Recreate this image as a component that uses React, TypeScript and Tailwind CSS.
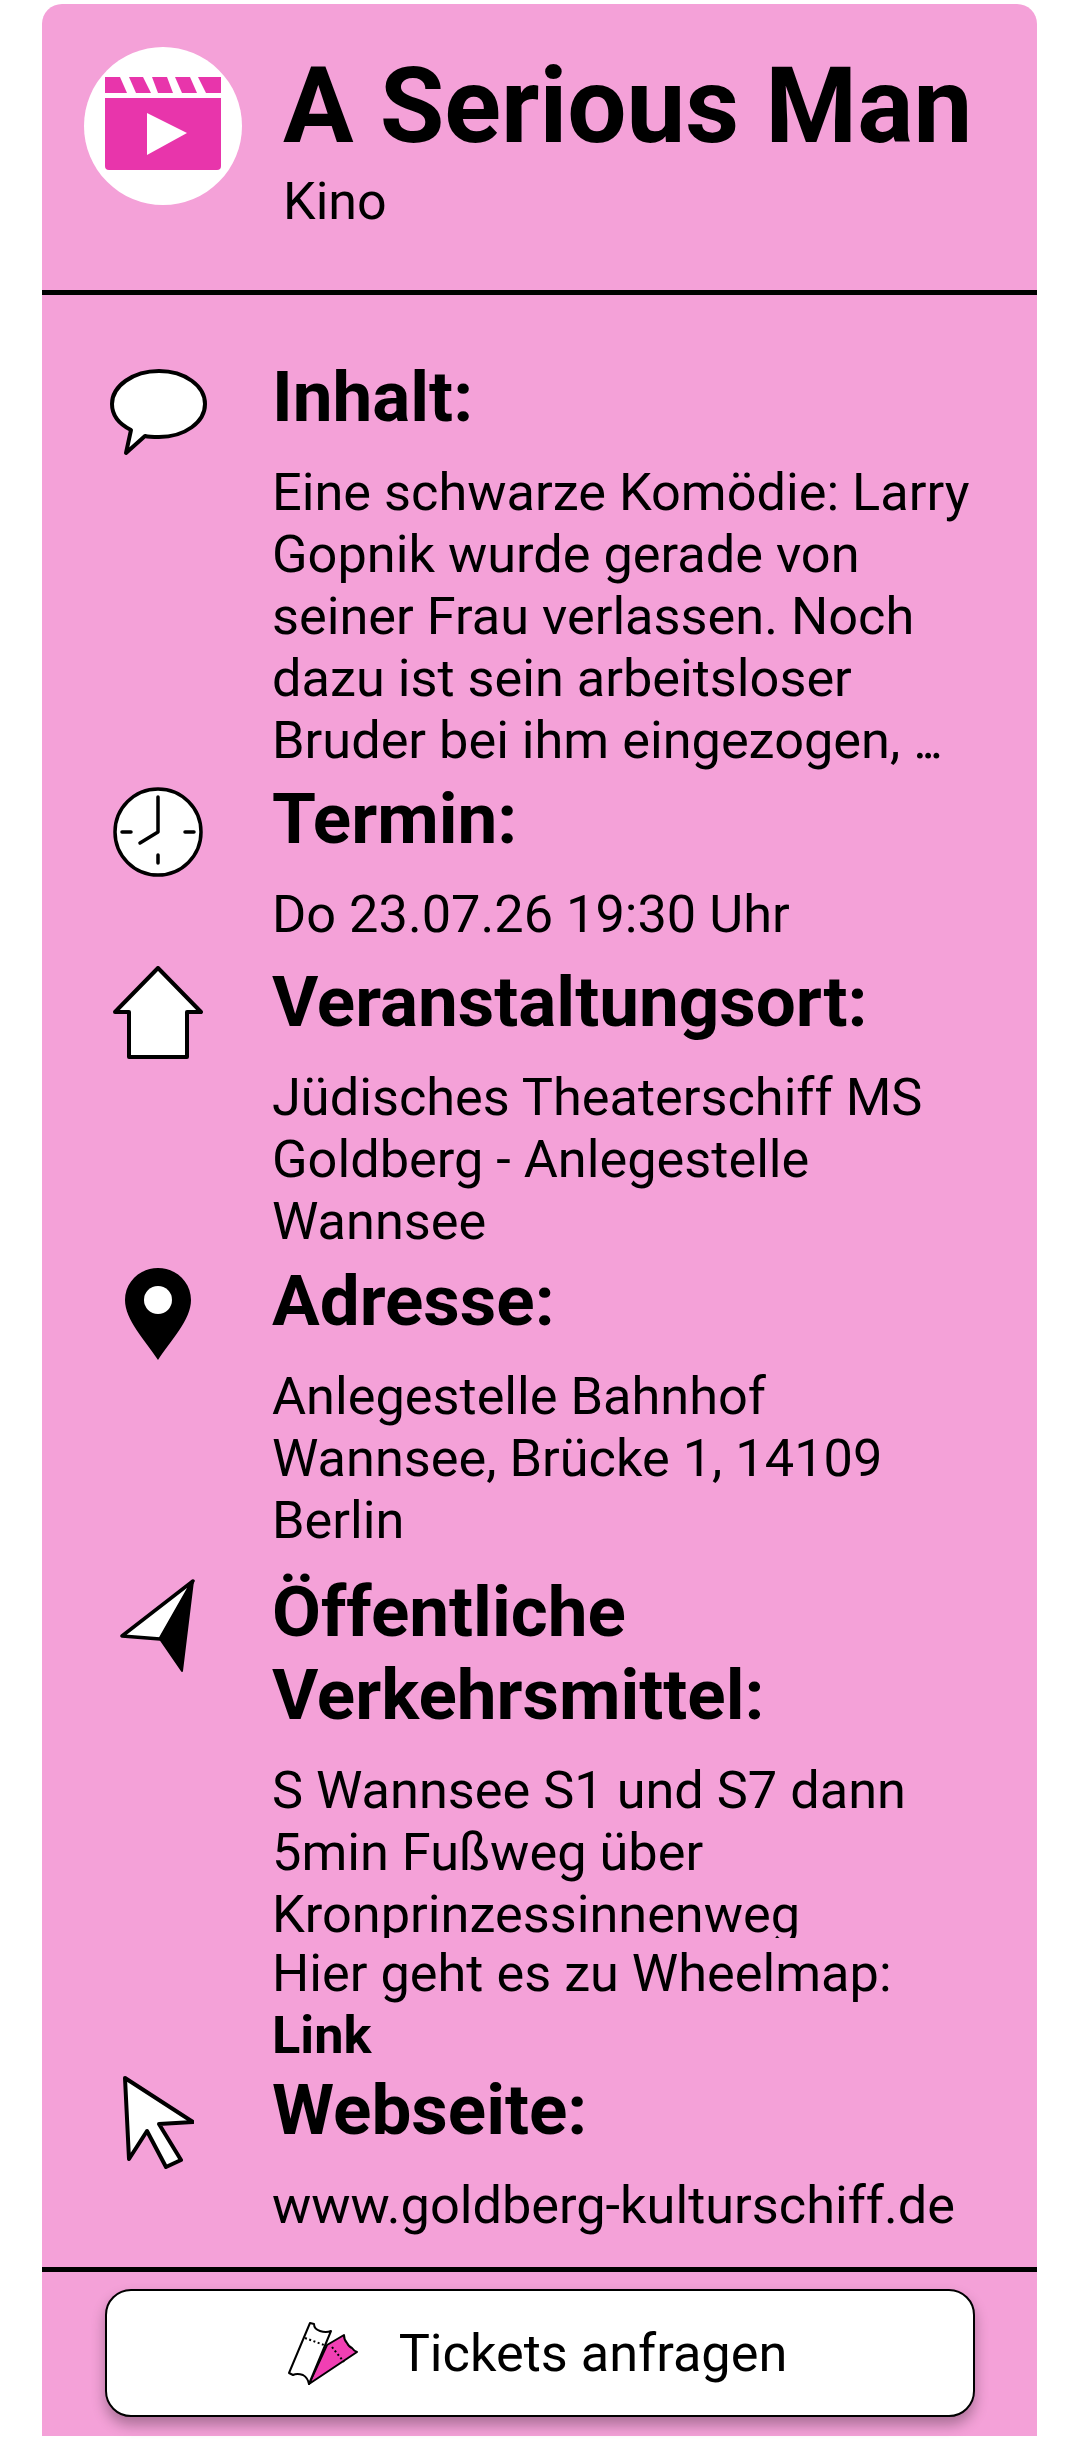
import type { ReactNode } from 'react'

const roboto = { fontFamily: 'Roboto, sans-serif' }

function ClapperIcon() {
  return (
    <svg viewBox="0 0 116 94" className="w-[116px] h-[94px] mt-[-4px]">
      <path d="M0 0h15l7 16H0z M24 0h14l8 16H31z M47 0h15l6 16H53z M70 0h15l7 16H77z M93 0h23v16H101z" fill="#e835ab" />
      <path d="M0 21h116v68q0 4-4 4H4q-4 0-4-4z" fill="#e835ab" />
      <path d="M42 36l40 20-40 22z" fill="#fff" />
    </svg>
  )
}

function SpeechIcon() {
  return (
    <svg viewBox="0 0 98 88" className="w-[98px] h-[88px]">
      <path d="M50 3C76 3 96 18 96 36S76 69 50 69c-5 0-10 0-14-1L17 85l5-23C10 56 3 47 3 36 3 18 24 3 50 3z" fill="#fff" stroke="#000" strokeWidth="4" strokeLinejoin="round" />
    </svg>
  )
}

function ClockIcon() {
  return (
    <svg viewBox="0 0 90 90" className="w-[90px] h-[90px]">
      <circle cx="45" cy="45" r="43" fill="#fff" stroke="#000" strokeWidth="3.5" />
      <path d="M45 10v35L27 56M9 45h9M72 45h9M45 68v8" fill="none" stroke="#000" strokeWidth="3.5" strokeLinecap="round" strokeLinejoin="round" />
    </svg>
  )
}

function HouseIcon() {
  return (
    <svg viewBox="0 0 90 94" className="w-[90px] h-[94px]">
      <path d="M45 2L88 46H74V91H16V46H2z" fill="#fff" stroke="#000" strokeWidth="4" strokeLinejoin="round" />
    </svg>
  )
}

function PinIcon() {
  return (
    <svg viewBox="0 0 66 92" className="w-[66px] h-[92px]">
      <path d="M33 0c18 0 33 14 33 32 0 20-20 40-33 60C20 72 0 52 0 32 0 14 15 0 33 0z" fill="#000" />
      <circle cx="33" cy="32" r="14" fill="#fff" />
    </svg>
  )
}

function ArrowIcon() {
  return (
    <svg viewBox="0 0 76 94" className="w-[76px] h-[94px]">
      <path d="M73 2L2 57l38 3z" fill="#fff" stroke="#000" strokeWidth="3.5" strokeLinejoin="round" />
      <path d="M73 2L40 60l22 32z" fill="#000" stroke="#000" strokeWidth="2" strokeLinejoin="round" />
    </svg>
  )
}

function CursorIcon() {
  return (
    <svg viewBox="0 0 72 94" className="w-[72px] h-[94px]">
      <path d="M3 3L71 47 37 49 59 85 44 92 25 56 7 84z" fill="#fff" stroke="#000" strokeWidth="4" strokeLinejoin="round" />
    </svg>
  )
}

function TicketIcon() {
  return (
    <svg viewBox="0 0 72 65" className="w-[72px] h-[65px]">
      <path d="M22 63L40 24 57 14Q57 19 60 22 62 26 65 27 67 30 70 31z" fill="#f13fb3" stroke="#000" strokeWidth="2" strokeLinejoin="round" />
      <path d="M45 26L57 41" fill="none" stroke="#000" strokeWidth="2" strokeDasharray="2 2.5" />
      <path d="M23 2L27 3Q27 8 33 10 39 12 44 10L22 63Q21 57 16 54 10 52 6 54L2 52z" fill="#fff" stroke="#000" strokeWidth="2" strokeLinejoin="round" />
      <path d="M18 17L37 24" fill="none" stroke="#000" strokeWidth="2" strokeDasharray="2 2.5" />
    </svg>
  )
}

const rows: { icon: ReactNode; title: string; gap: string; iconPad: string; lines: ReactNode[]; extra?: boolean }[] = [
  {
    icon: <SpeechIcon />,
    title: 'Inhalt:',
    gap: 'mt-0',
    iconPad: 'pt-[11px]',
    lines: [
      'Eine schwarze Komödie: Larry',
      'Gopnik wurde gerade von',
      'seiner Frau verlassen. Noch',
      'dazu ist sein arbeitsloser',
      <>Bruder bei ihm eingezogen, <span className="tracking-[-5.5px]">...</span></>,
    ],
  },
  { icon: <ClockIcon />, title: 'Termin:', gap: 'mt-[8px]', iconPad: 'pt-[8px]', lines: ['Do 23.07.26 19:30 Uhr'] },
  {
    icon: <HouseIcon />,
    title: 'Veranstaltungsort:',
    gap: 'mt-[17px]',
    iconPad: 'pt-[4px]',
    lines: ['Jüdisches Theaterschiff MS', 'Goldberg - Anlegestelle', 'Wannsee'],
  },
  {
    icon: <PinIcon />,
    title: 'Adresse:',
    gap: 'mt-[9px]',
    iconPad: 'pt-[7px]',
    lines: ['Anlegestelle Bahnhof', 'Wannsee, Brücke 1, 14109', 'Berlin'],
  },
  {
    icon: <ArrowIcon />,
    title: 'Öffentliche Verkehrsmittel:',
    gap: 'mt-[21px]',
    iconPad: 'pt-[7px]',
    lines: ['S Wannsee S1 und S7 dann', '5min Fußweg über', 'Kronprinzessinnenweg'],
    extra: true,
  },
  { icon: <CursorIcon />, title: 'Webseite:', gap: 'mt-[4px]', iconPad: 'pt-[5px]', lines: ['www.goldberg-kulturschiff.de'] },
]

export default function App() {
  return (
    <div className="w-[1078px] h-[2448px] bg-white overflow-hidden pt-[4px] pl-[42px]" style={roboto}>
      <div className="w-[995px] h-[2432px] bg-[#f4a1d8] rounded-t-[20px] text-black flex flex-col">
        {/* Header */}
        <div className="h-[291px] shrink-0 border-b-[5px] border-black flex items-start pl-[42px] pt-[43px]">
          <div className="w-[158px] h-[158px] rounded-full bg-white flex items-center justify-center shrink-0">
            <ClapperIcon />
          </div>
          <div className="ml-[41px]">
            <h1 className="text-[105px] leading-[110px] font-bold mt-[5px] whitespace-nowrap">A Serious Man</h1>
            <p className="text-[52px] leading-[60px] mt-[10px]">Kino</p>
          </div>
        </div>

        {/* Details */}
        <div className="flex-1 pt-[62px] flex flex-col">
          {rows.map((row) => (
            <div key={row.title} className={`flex ${row.gap}`}>
              <div className={`w-[230px] shrink-0 pl-[2px] flex justify-center items-start ${row.iconPad}`}>{row.icon}</div>
              <div className="w-[722px]">
                <h2 className="text-[71px] leading-[83px] font-bold mt-[-2px]">{row.title}</h2>
                <div className="mt-[23px] text-[52.3px] leading-[62px]">
                  <div className={row.extra ? 'h-[179px] overflow-hidden mb-[4px]' : ''}>
                    {row.lines.map((line, index) => (
                      <p key={index} className="whitespace-nowrap">{line}</p>
                    ))}
                  </div>
                  {row.extra && (
                    <>
                      <p>Hier geht es zu Wheelmap:</p>
                      <p className="font-bold">Link</p>
                    </>
                  )}
                </div>
              </div>
            </div>
          ))}
        </div>

        {/* Footer */}
        <div className="h-[169px] shrink-0 border-t-[5px] border-black pl-[63px] pt-[17px]">
          <button className="w-[870px] h-[128px] bg-white border-2 border-black rounded-[26px] shadow-[0_8px_14px_rgba(0,0,0,0.3)] flex items-center justify-center gap-[40px] pr-[6px]">
            <TicketIcon />
            <span className="text-[52.3px]">Tickets anfragen</span>
          </button>
        </div>
      </div>
    </div>
  )
}
